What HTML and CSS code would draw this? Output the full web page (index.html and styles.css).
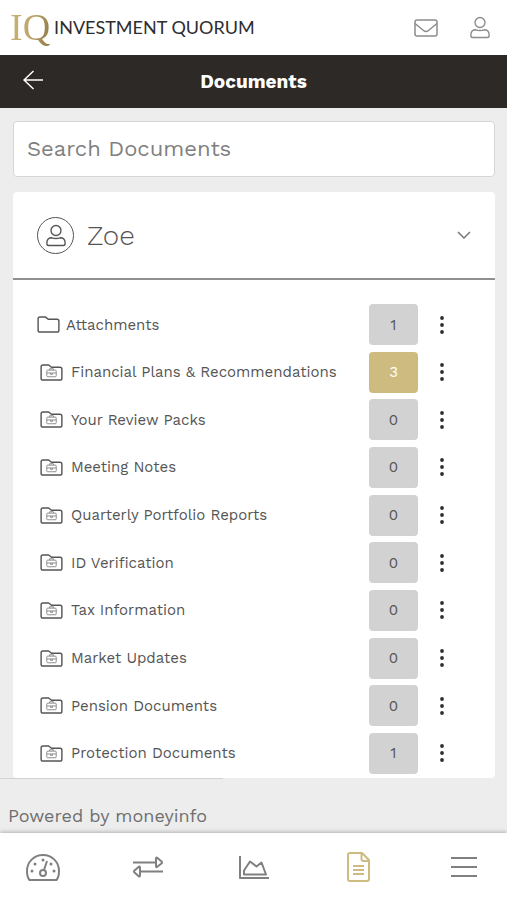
FILE: index.html
```html
<!DOCTYPE html>
<html lang="en">
<head>
<meta charset="utf-8">
<meta name="viewport" content="width=device-width, initial-scale=1">
<title>Documents</title>
<link rel="stylesheet" href="styles.css">
</head>
<body>
<svg class="symbols" aria-hidden="true">
  <symbol id="person" viewBox="0 0 22 24"><circle cx="11" cy="6.5" r="5.5"/><path d="M6.500 14.500Q11 16 15.500 14.500C19 14.500 21 16.500 21 20V21Q21 23 19 23H3Q1 23 1 21V20C1 16.500 3 14.500 6.500 14.500Z"/></symbol>
  <symbol id="folder" viewBox="0 0 24 18"><path d="M1 15V3Q1 1 3 1H8.500L12 3.500H21Q23 3.500 23 5.500V15Q23 17 21 17H3Q1 17 1 15Z"/></symbol>
  <symbol id="case-folder" viewBox="0 0 24 18"><path d="M1 15V3Q1 1 3 1H9L12 3.500H21Q23 3.500 23 5.500V15Q23 17 21 17H3Q1 17 1 15Z"/><g class="case"><rect x="7" y="6.500" width="10" height="7" rx="1"/><path d="M10 6.500V5H14V6.500M7 9.500H17M11 9.500V11H13V9.500"/></g></symbol>
  <symbol id="dots" viewBox="0 0 6 20"><circle cx="3" cy="3" r="1.900"/><circle cx="3" cy="10" r="1.900"/><circle cx="3" cy="17" r="1.900"/></symbol>
</svg>
<header class="brand-bar">
  <a class="brand" href="#"><span class="monogram">IQ</span><span class="brand-name">INVESTMENT QUORUM</span></a>
  <div class="tools">
    <button aria-label="Messages"><svg class="line" width="24" height="18" viewBox="0 0 24 18"><rect x="1" y="1" width="22" height="16" rx="2"/><path d="M1 4.500L9.500 11.500Q12 13.500 14.500 11.500L23 4.500"/></svg></button>
    <button aria-label="Profile"><svg class="line" width="20" height="23"><use href="#person"/></svg></button>
  </div>
</header>
<div class="title-bar">
  <a class="back" href="#" aria-label="Back"><svg width="20" height="20" viewBox="0 0 20 20"><path d="M10.500 1L1 10L10.500 19M1 10H20"/></svg></a>
  <h1>Documents</h1>
</div>
<main>
  <input class="search" type="search" placeholder="Search Documents" aria-label="Search Documents">
  <section class="card">
    <button class="owner" aria-expanded="true">
      <span class="avatar"><svg width="20" height="23"><use href="#person"/></svg></span>
      <span class="owner-name">Zoe</span>
      <svg class="chevron" width="14" height="8" viewBox="0 0 14 8"><path d="M1 1L7 7L13 1"/></svg>
    </button>
    <ul class="folders">
      <li><a class="plain" href="#"><svg class="folder"><use href="#folder"/></svg>Attachments</a><span class="count">1</span><button class="more" aria-label="Attachments options"><svg><use href="#dots"/></svg></button></li>
      <li><a href="#"><svg class="folder"><use href="#case-folder"/></svg>Financial Plans &amp; Recommendations</a><span class="count new">3</span><button class="more" aria-label="Financial Plans options"><svg><use href="#dots"/></svg></button></li>
      <li><a href="#"><svg class="folder"><use href="#case-folder"/></svg>Your Review Packs</a><span class="count">0</span><button class="more" aria-label="Your Review Packs options"><svg><use href="#dots"/></svg></button></li>
      <li><a href="#"><svg class="folder"><use href="#case-folder"/></svg>Meeting Notes</a><span class="count">0</span><button class="more" aria-label="Meeting Notes options"><svg><use href="#dots"/></svg></button></li>
      <li><a href="#"><svg class="folder"><use href="#case-folder"/></svg>Quarterly Portfolio Reports</a><span class="count">0</span><button class="more" aria-label="Quarterly Portfolio Reports options"><svg><use href="#dots"/></svg></button></li>
      <li><a href="#"><svg class="folder"><use href="#case-folder"/></svg>ID Verification</a><span class="count">0</span><button class="more" aria-label="ID Verification options"><svg><use href="#dots"/></svg></button></li>
      <li><a href="#"><svg class="folder"><use href="#case-folder"/></svg>Tax Information</a><span class="count">0</span><button class="more" aria-label="Tax Information options"><svg><use href="#dots"/></svg></button></li>
      <li><a href="#"><svg class="folder"><use href="#case-folder"/></svg>Market Updates</a><span class="count">0</span><button class="more" aria-label="Market Updates options"><svg><use href="#dots"/></svg></button></li>
      <li><a href="#"><svg class="folder"><use href="#case-folder"/></svg>Pension Documents</a><span class="count">0</span><button class="more" aria-label="Pension Documents options"><svg><use href="#dots"/></svg></button></li>
      <li><a href="#"><svg class="folder"><use href="#case-folder"/></svg>Protection Documents</a><span class="count">1</span><button class="more" aria-label="Protection Documents options"><svg><use href="#dots"/></svg></button></li>
    </ul>
  </section>
</main>
<footer class="powered">Powered by moneyinfo</footer>
<nav class="tabs" aria-label="Main">
  <a href="#" aria-label="Dashboard"><svg width="34" height="27" viewBox="0 0 34 27"><path d="M3.500 26Q1 23 1 17C1 8 8 1 17 1S33 8 33 17Q33 23 30.500 26Z"/><circle cx="17" cy="19" r="3"/><path d="M18 16L21 7"/><g class="solid"><circle cx="6" cy="17" r="1.500"/><circle cx="9" cy="10" r="1.500"/><circle cx="17" cy="6" r="1.500"/><circle cx="25" cy="10" r="1.500"/><circle cx="28" cy="17" r="1.500"/></g></svg></a>
  <a href="#" aria-label="Transactions"><svg width="30" height="22" viewBox="0 0 30 22"><path d="M0 6.500H23M23 3V10Q23 12 24.500 10.500L28.500 7.500Q29.500 6.500 28.500 5.500L24.500 2Q23 .5 23 3ZM30 15.500H7M7 12V19Q7 21.500 5.500 20L1.500 16.500Q.5 15.500 1.500 14.500L5.500 11Q7 9.500 7 12Z"/></svg></a>
  <a href="#" aria-label="Performance"><svg width="30" height="23" viewBox="0 0 30 23"><path d="M1 0V22H30M5 18.500V14.500L11 5.500L17.500 10.500L22.500 6.500L27 18.500Z"/></svg></a>
  <a class="current" href="#" aria-label="Documents" aria-current="page"><svg width="23" height="30" viewBox="0 0 23 30"><path d="M3 1H15L22 8V27Q22 29 20 29H3Q1 29 1 27V3Q1 1 3 1ZM14.500 1V7Q14.500 9 16.500 9H22M6 14H17M6 18H17M6 22H17"/></svg></a>
  <a href="#" aria-label="Menu"><svg width="26" height="22" viewBox="0 0 26 22"><path d="M0 2H26M0 11H26M0 20H26"/></svg></a>
</nav>
</body>
</html>
```
FILE: styles.css
```css
* { box-sizing: border-box; }

body {
  margin: 0;
  min-height: 100vh;
  display: flex;
  flex-direction: column;
  background: #ededed;
  color: #555;
  font-family: "Work Sans", Inter, sans-serif;
  font-size: 15px;
}

button { padding: 0; border: 0; background: none; color: inherit; font: inherit; }
a { color: inherit; text-decoration: none; }
svg { display: block; flex: none; fill: none; stroke: currentColor; stroke-width: 2; stroke-linejoin: round; }
.symbols { position: absolute; width: 0; height: 0; }

.brand-bar {
  height: 55px;
  padding: 0 17px 0 10px;
  display: flex;
  align-items: center;
  justify-content: space-between;
  background: #fff;
}
.brand { display: flex; align-items: center; gap: 4px; padding-bottom: 2px; }
.monogram {
  font-family: "Liberation Serif", serif;
  font-size: 38px;
  line-height: 44px;
  background: linear-gradient(100deg, #c9b577, #bda66a 50%, #8f7a45);
  background-clip: text;
  color: transparent;
}
.brand-name { font-family: Lato, sans-serif; font-size: 18px; color: #2d2d2f; }
.tools { display: flex; align-items: center; gap: 32px; color: #8c8c8c; }
.line { stroke-width: 1.5; }

.title-bar {
  height: 53px;
  padding: 0 23px;
  display: grid;
  grid-template-columns: 20px 1fr 20px;
  align-items: center;
  background: #2d2926;
  color: #fff;
}
.back { padding-bottom: 4px; }
.back svg { stroke-width: 1.5; }
h1 { margin: 0; text-align: center; font-size: 19px; font-weight: 700; }

main { flex: 1; display: flex; flex-direction: column; gap: 15px; padding: 13px 12px 0 13px; }
.search {
  width: 100%;
  height: 56px;
  padding: 0 13px 2px;
  border: 1px solid #d6d6d6;
  border-radius: 4px;
  background: #fff;
  color: #555;
  font: inherit;
  font-size: 22px;
}
.search::placeholder { color: #808080; opacity: 1; }

.card { flex: 1; display: flex; flex-direction: column; border-radius: 4px; background: #fff; }
.owner {
  height: 88px;
  padding: 0 24px;
  display: flex;
  align-items: center;
  gap: 13px;
  border-bottom: 2px solid #8f8f8f;
}
.avatar {
  width: 37px;
  height: 37px;
  display: grid;
  place-items: center;
  border: 1px solid #555;
  border-radius: 50%;
}
.avatar svg { stroke-width: 1.5; }
.owner-name { font-size: 28px; font-weight: 300; }
.chevron { margin-left: auto; stroke-width: 1.5; color: #777; }

.folders {
  flex: 1;
  margin: 0;
  padding: 24px 43px 4px 27px;
  display: flex;
  flex-direction: column;
  justify-content: space-between;
  list-style: none;
}
.folders li { display: flex; align-items: center; }
.folders a { flex: 1; display: flex; align-items: center; gap: 8px; }
.folders .plain { margin-left: -3px; gap: 6px; }
.folder { width: 23px; height: 17px; stroke-width: 1.5; }
.case { stroke-width: 1; color: #888; }
.count {
  width: 49px;
  height: 41px;
  display: grid;
  place-items: center;
  border-radius: 4px;
  background: #d2d2d2;
}
.count.new { background: #cebb7f; color: #fff; }
.more { width: 20px; margin-left: 14px; display: grid; place-items: center; color: #2f2f2f; }
.more svg { width: 6px; height: 20px; fill: currentColor; stroke: none; }

.powered {
  height: 55px;
  padding: 26px 8px 0;
  background: linear-gradient(#d2d2d2, #d2d2d2) 0 0 / 44% 1px no-repeat;
  color: #6f6f6f;
  font-size: 18px;
  line-height: 24px;
}
.tabs {
  height: 67px;
  padding: 0 17px;
  display: flex;
  justify-content: space-between;
  background: #fff;
  box-shadow: 0 -1px 4px rgba(0, 0, 0, .25);
  color: #808080;
}
.tabs a { width: 52px; height: 68px; display: grid; place-items: center; }
.tabs .current { color: #cebb7f; }
.tabs .solid { fill: currentColor; stroke: none; }
```
